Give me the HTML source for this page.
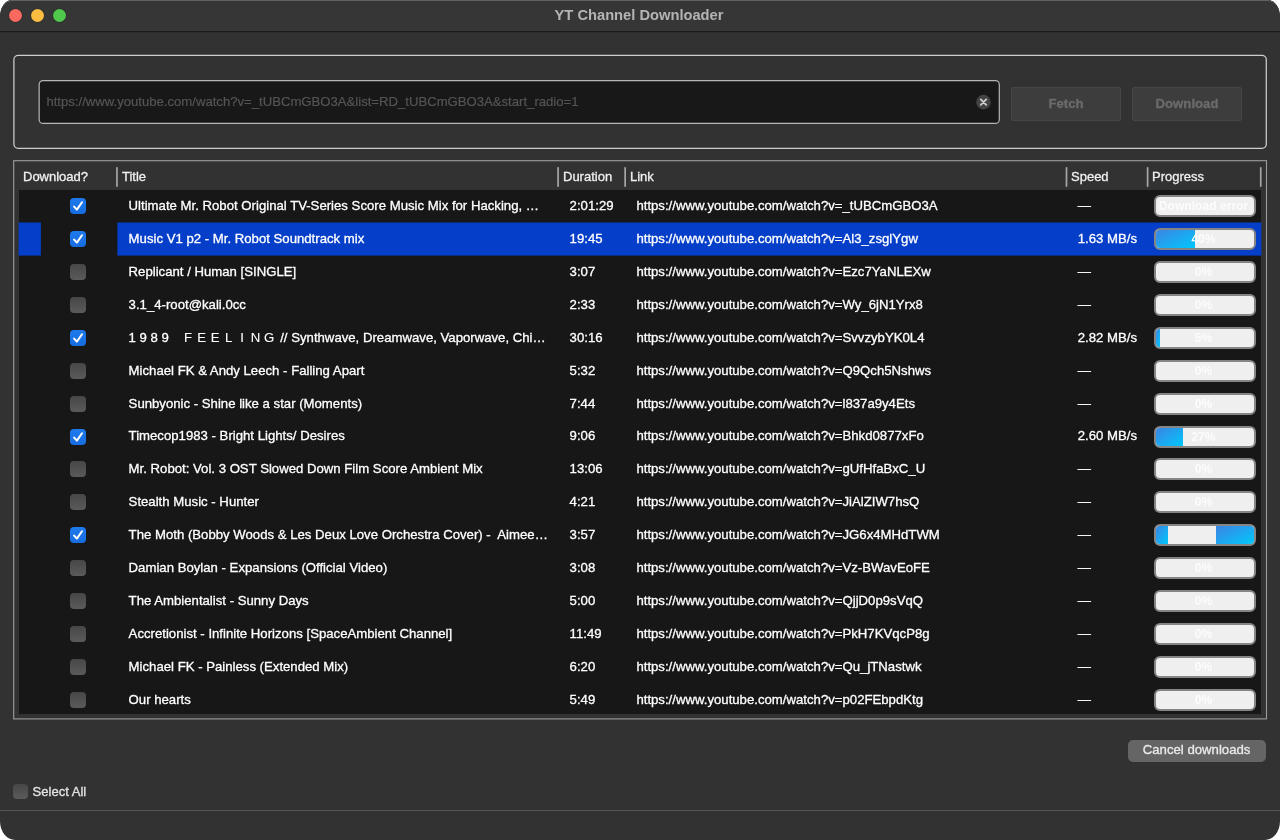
<!DOCTYPE html>
<html lang="en"><head><meta charset="utf-8"><title>YT Channel Downloader</title>
<style>
html,body{margin:0;padding:0;background:#fff;}
body{width:1280px;height:840px;overflow:hidden;position:relative;font-family:"Liberation Sans","Noto Sans CJK JP",sans-serif;font-size:13.18px;color:#fff;-webkit-text-stroke:0.3px currentColor;}
.winsvg{position:absolute;left:0;top:0}
.win{position:absolute;left:0;top:0;width:1280px;height:840px;background:#323232;border-radius:11px 11px 17px 17px;overflow:hidden;}
.ly{position:absolute;left:0;top:0;width:1280px;height:840px;will-change:transform;}
.tb{position:absolute;left:0;top:0;width:1280px;height:31px;}
.tb .ttl{position:absolute;left:0;width:1278px;top:0;line-height:31px;text-align:center;font-weight:bold;color:#b4b4b4;font-size:14.7px;-webkit-text-stroke:0;}
.dot{position:absolute;top:9px;width:13px;height:13px;border-radius:50%;}
.frames{position:absolute;left:0;top:0}
.grp{position:absolute;left:13px;top:55px;width:1252px;height:92px;border:1px solid #bcbcbc;border-radius:6px;}
.inp{position:absolute;left:38px;top:80px;width:960px;height:42px;border:1px solid transparent;}
.inp .v{position:absolute;left:7.4px;top:0;line-height:41.8px;color:#555;white-space:nowrap;font-size:13.13px;-webkit-text-stroke:0.2px;}
.clr{position:absolute;left:976px;top:94px;width:15px;height:15px;}
.btn{position:absolute;top:87px;height:32px;width:108px;border:1px solid #464646;background:#3d3d3d;color:#6b6b6b;font-weight:bold;text-align:center;line-height:31.6px;border-radius:2px;}
.tbl{position:absolute;left:13px;top:160px;width:1252px;height:557px;border:1px solid #9c9c9c;}
.vp{position:absolute;left:18.6px;top:189.7px;width:1242.8px;height:524.1px;background:#171717;}
.hd{position:absolute;top:162.7px;height:28px;line-height:28px;font-size:13px;white-space:nowrap;color:#f0f0f0;}
.seps{position:absolute;left:0;top:0}
.sep{position:absolute;top:167px;width:2px;height:20px;background:linear-gradient(to right,#5c5c5c 50%,#969696 50%);}
.rows{position:absolute;left:0;top:0;width:1280px;height:713.8px;overflow:hidden;}
.row{position:absolute;left:0;width:1280px;height:32.875px;}
.selbg{position:absolute;left:0;top:-0.5px}
.row i.s1{position:absolute;left:18.6px;top:0;width:22.4px;height:33.1px;background:#0539c8;}
.row i.s2{position:absolute;left:117.4px;top:0;width:1144px;height:33.1px;background:#0539c8;}
.t{position:absolute;top:0.5px;line-height:32.5px;white-space:pre;color:#fff;}
.fw{margin-left:1.5px;margin-right:0.7px;-webkit-text-stroke:0.1px}.fw b{display:inline-block;width:13.5px;text-align:center;font-weight:normal}
.c1{left:128.6px}.c2{left:569.6px}.c3{left:636.4px}.c4{left:1077.8px}
.cb{position:absolute;left:70px;top:8.6px;width:16px;height:16px;border-radius:4px;background:linear-gradient(#474747,#5a5a5a);}
.cb.on{background:linear-gradient(#1e7aec,#166ce0);}
.cb svg{position:absolute;left:0;top:0;}
.pb{position:absolute;left:1154px;top:5.6px;width:98px;height:18px;border:2px solid #858585;border-radius:6px;background:#efefef;overflow:hidden;}
.pb .ch{position:absolute;top:0;height:18px;background:linear-gradient(to bottom right,#3d84e2,#00c8fc);}
.pb .lbl{position:absolute;left:-1.5px;top:0;width:98px;line-height:18px;text-align:center;color:#fcfcfc;font-weight:bold;font-size:12.1px;white-space:nowrap;-webkit-text-stroke:0;}
.cancel{position:absolute;left:1127.5px;top:740.3px;width:138.2px;height:21.6px;border-radius:5px;background:#656565;color:#ebebeb;text-align:center;line-height:20px;}
.sa{position:absolute;left:32.6px;top:782px;line-height:20px;color:#e4e4e4;font-size:13.05px;}
.sacb{position:absolute;left:13px;top:784px;width:15px;height:15px;border-radius:4px;background:linear-gradient(#474747,#5a5a5a);}
.bl{position:absolute;left:0;top:810px;width:1280px;height:1px;background:#555;}
</style></head><body>
<svg class="winsvg" width="1280" height="840" viewBox="0 0 1280 840"><defs><linearGradient id="hlg" x1="0" y1="0" x2="0" y2="1"><stop offset="0" stop-color="#626262"/><stop offset="0.35" stop-color="#626262" stop-opacity="0"/></linearGradient></defs><path d="M12 0 H1268 A12 17 0 0 1 1280 17 V821 A15 19 0 0 1 1265 840 H15 A15 19 0 0 1 0 821 V17 A12 17 0 0 1 12 0 Z" fill="#323232"/><path d="M12 0 H1268 A12 17 0 0 1 1280 17 V31 H0 V17 A12 17 0 0 1 12 0 Z" fill="#363636"/><path d="M0.5 17 A11.5 16.5 0 0 1 12 0.5 H1268 A11.5 16.5 0 0 1 1279.5 17" fill="none" stroke="url(#hlg)" stroke-width="1"/><rect x="0" y="31" width="1280" height="1.2" fill="#1b1b1b"/></svg>
<div class="ly">
<div class="tb"><span class="dot" style="left:9px;background:#fa695f;box-shadow:0 0 0 0.5px rgba(0,0,0,.25)"></span><span class="dot" style="left:31px;background:#fabd40;box-shadow:0 0 0 0.5px rgba(0,0,0,.25)"></span><span class="dot" style="left:53px;background:#4fc84b;box-shadow:0 0 0 0.5px rgba(0,0,0,.25)"></span><div class="ttl">YT Channel Downloader</div></div>
<svg class="frames" width="1280" height="840" viewBox="0 0 1280 840" fill="none"><rect x="13.9" y="55.4" width="1252.4" height="93" rx="4.3" stroke="#cdcdcd" stroke-width="1.25"/><rect x="39.15" y="80.55" width="960.15" height="42.85" rx="4" fill="#181818" stroke="#b6b6b6" stroke-width="1.2"/><g transform="translate(976 94.65)"><circle cx="7.5" cy="7.5" r="7.3" fill="#434343"/><path d="M4.8 4.8 L10.2 10.2 M10.2 4.8 L4.8 10.2" stroke="#cfcfcf" stroke-width="1.8" stroke-linecap="round"/></g><rect x="13.7" y="160.7" width="1252.8" height="558.2" stroke="#9e9e9e" stroke-width="1.1"/></svg>
<div class="inp"><span class="v">https://www.youtube.com/watch?v=_tUBCmGBO3A&amp;list=RD_tUBCmGBO3A&amp;start_radio=1</span></div>
<div class="btn" style="left:1011px">Fetch</div>
<div class="btn" style="left:1132px">Download</div>
<div class="hd" style="left:23px">Download?</div>
<div class="hd" style="left:122px">Title</div>
<div class="hd" style="left:563px">Duration</div>
<div class="hd" style="left:630px">Link</div>
<div class="hd" style="left:1071px">Speed</div>
<div class="hd" style="left:1152px">Progress</div>

<svg class="seps" width="1280" height="200" viewBox="0 0 1280 200"><rect x="116.10" y="167" width="1.7" height="20" rx="0.8" fill="#a6a6a6"/><rect x="557.25" y="167" width="1.7" height="20" rx="0.8" fill="#a6a6a6"/><rect x="624.30" y="167" width="1.7" height="20" rx="0.8" fill="#a6a6a6"/><rect x="1065.65" y="167" width="1.7" height="20" rx="0.8" fill="#a6a6a6"/><rect x="1146.75" y="167" width="1.7" height="20" rx="0.8" fill="#a6a6a6"/><rect x="1259.90" y="167" width="1.7" height="20" rx="0.8" fill="#a6a6a6"/></svg>
<div class="vp"></div>
<div class="rows">
<div class="row" style="top:189.700px"><span class="cb on"><svg viewBox="0 0 16 16" width="16" height="16"><path d="M4.1 8.6 L6.9 11.6 L12 4.3" fill="none" stroke="#fff" stroke-width="2" stroke-linecap="round" stroke-linejoin="round"/></svg></span><span class="t c1">Ultimate Mr. Robot Original TV-Series Score Music Mix for Hacking, …</span><span class="t c2">2:01:29</span><span class="t c3">https://www.youtube.com/watch?v=_tUBCmGBO3A</span><span class="t c4">—</span><span class="pb"><b class="lbl">Download error</b></span></div>
<div class="row sel" style="top:222.590px"><svg class="selbg" width="1280" height="35" viewBox="0 0 1280 35"><rect x="18.6" y="0.5" width="22.3" height="33.1" fill="#053ec8"/><rect x="117.4" y="0.5" width="1144" height="33.1" fill="#053ec8"/></svg><span class="cb on"><svg viewBox="0 0 16 16" width="16" height="16"><path d="M4.1 8.6 L6.9 11.6 L12 4.3" fill="none" stroke="#fff" stroke-width="2" stroke-linecap="round" stroke-linejoin="round"/></svg></span><span class="t c1">Music V1 p2 - Mr. Robot Soundtrack mix</span><span class="t c2">19:45</span><span class="t c3">https://www.youtube.com/watch?v=Al3_zsglYgw</span><span class="t c4">1.63 MB/s</span><span class="pb"><i class="ch" style="left:0;width:39.2px"></i><b class="lbl">40%</b></span></div>
<div class="row" style="top:255.480px"><span class="cb"></span><span class="t c1">Replicant / Human [SINGLE]</span><span class="t c2">3:07</span><span class="t c3">https://www.youtube.com/watch?v=Ezc7YaNLEXw</span><span class="t c4">—</span><span class="pb"><b class="lbl">0%</b></span></div>
<div class="row" style="top:288.370px"><span class="cb"></span><span class="t c1">3.1_4-root@kali.0cc</span><span class="t c2">2:33</span><span class="t c3">https://www.youtube.com/watch?v=Wy_6jN1Yrx8</span><span class="t c4">—</span><span class="pb"><b class="lbl">0%</b></span></div>
<div class="row" style="top:321.260px"><span class="cb on"><svg viewBox="0 0 16 16" width="16" height="16"><path d="M4.1 8.6 L6.9 11.6 L12 4.3" fill="none" stroke="#fff" stroke-width="2" stroke-linecap="round" stroke-linejoin="round"/></svg></span><span class="t c1">1 9 8 9   <span class=fw><b>F</b><b>E</b><b>E</b><b>L</b><b>I</b><b>N</b><b>G</b></span> // Synthwave, Dreamwave, Vaporwave, Chi…</span><span class="t c2">30:16</span><span class="t c3">https://www.youtube.com/watch?v=SvvzybYK0L4</span><span class="t c4">2.82 MB/s</span><span class="pb"><i class="ch" style="left:0;width:4.0px"></i><b class="lbl">5%</b></span></div>
<div class="row" style="top:354.150px"><span class="cb"></span><span class="t c1">Michael FK &amp; Andy Leech - Falling Apart</span><span class="t c2">5:32</span><span class="t c3">https://www.youtube.com/watch?v=Q9Qch5Nshws</span><span class="t c4">—</span><span class="pb"><b class="lbl">0%</b></span></div>
<div class="row" style="top:387.040px"><span class="cb"></span><span class="t c1">Sunbyonic - Shine like a star (Moments)</span><span class="t c2">7:44</span><span class="t c3">https://www.youtube.com/watch?v=l837a9y4Ets</span><span class="t c4">—</span><span class="pb"><b class="lbl">0%</b></span></div>
<div class="row" style="top:419.930px"><span class="cb on"><svg viewBox="0 0 16 16" width="16" height="16"><path d="M4.1 8.6 L6.9 11.6 L12 4.3" fill="none" stroke="#fff" stroke-width="2" stroke-linecap="round" stroke-linejoin="round"/></svg></span><span class="t c1">Timecop1983 - Bright Lights/ Desires</span><span class="t c2">9:06</span><span class="t c3">https://www.youtube.com/watch?v=Bhkd0877xFo</span><span class="t c4">2.60 MB/s</span><span class="pb"><i class="ch" style="left:0;width:26.5px"></i><b class="lbl">27%</b></span></div>
<div class="row" style="top:452.820px"><span class="cb"></span><span class="t c1">Mr. Robot: Vol. 3 OST Slowed Down Film Score Ambient Mix</span><span class="t c2">13:06</span><span class="t c3">https://www.youtube.com/watch?v=gUfHfaBxC_U</span><span class="t c4">—</span><span class="pb"><b class="lbl">0%</b></span></div>
<div class="row" style="top:485.710px"><span class="cb"></span><span class="t c1">Stealth Music - Hunter</span><span class="t c2">4:21</span><span class="t c3">https://www.youtube.com/watch?v=JiAlZIW7hsQ</span><span class="t c4">—</span><span class="pb"><b class="lbl">0%</b></span></div>
<div class="row" style="top:518.600px"><span class="cb on"><svg viewBox="0 0 16 16" width="16" height="16"><path d="M4.1 8.6 L6.9 11.6 L12 4.3" fill="none" stroke="#fff" stroke-width="2" stroke-linecap="round" stroke-linejoin="round"/></svg></span><span class="t c1">The Moth (Bobby Woods &amp; Les Deux Love Orchestra Cover) -  Aimee…</span><span class="t c2">3:57</span><span class="t c3">https://www.youtube.com/watch?v=JG6x4MHdTWM</span><span class="t c4">—</span><span class="pb"><i class="ch" style="left:0;width:12px"></i><i class="ch" style="left:60px;width:38px"></i></span></div>
<div class="row" style="top:551.490px"><span class="cb"></span><span class="t c1">Damian Boylan - Expansions (Official Video)</span><span class="t c2">3:08</span><span class="t c3">https://www.youtube.com/watch?v=Vz-BWavEoFE</span><span class="t c4">—</span><span class="pb"><b class="lbl">0%</b></span></div>
<div class="row" style="top:584.380px"><span class="cb"></span><span class="t c1">The Ambientalist - Sunny Days</span><span class="t c2">5:00</span><span class="t c3">https://www.youtube.com/watch?v=QjjD0p9sVqQ</span><span class="t c4">—</span><span class="pb"><b class="lbl">0%</b></span></div>
<div class="row" style="top:617.270px"><span class="cb"></span><span class="t c1">Accretionist - Infinite Horizons [SpaceAmbient Channel]</span><span class="t c2">11:49</span><span class="t c3">https://www.youtube.com/watch?v=PkH7KVqcP8g</span><span class="t c4">—</span><span class="pb"><b class="lbl">0%</b></span></div>
<div class="row" style="top:650.160px"><span class="cb"></span><span class="t c1">Michael FK - Painless (Extended Mix)</span><span class="t c2">6:20</span><span class="t c3">https://www.youtube.com/watch?v=Qu_jTNastwk</span><span class="t c4">—</span><span class="pb"><b class="lbl">0%</b></span></div>
<div class="row" style="top:683.050px"><span class="cb"></span><span class="t c1">Our hearts</span><span class="t c2">5:49</span><span class="t c3">https://www.youtube.com/watch?v=p02FEbpdKtg</span><span class="t c4">—</span><span class="pb"><b class="lbl">0%</b></span></div>
</div>
<div class="cancel">Cancel downloads</div>
<span class="sacb"></span><div class="sa">Select All</div>
<div class="bl"></div>
</div>
</body></html>
